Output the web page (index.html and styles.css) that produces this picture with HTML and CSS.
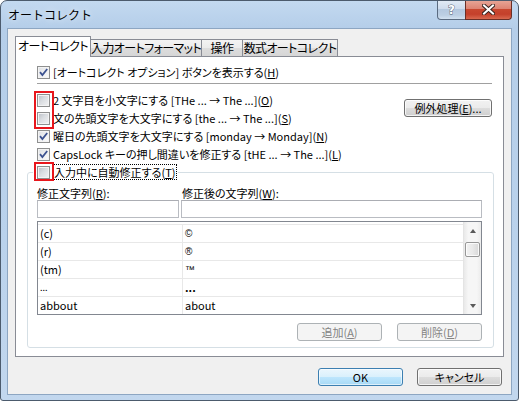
FILE: index.html
```html
<!DOCTYPE html>
<html lang="ja">
<head>
<meta charset="utf-8">
<title>オートコレクト</title>
<link rel="stylesheet" href="styles.css">
</head>
<body>
<div class="window">
  <div class="titlebar">
    <div class="title">オートコレクト</div>
    <div class="capbtns">
      <div class="cap help">?</div>
      <div class="cap close">
        <svg width="13" height="11" viewBox="0 0 13 11"><path d="M2 1.5 L11 9.5 M11 1.5 L2 9.5" stroke="#3b2520" stroke-width="4" stroke-linecap="square"/><path d="M2 1.5 L11 9.5 M11 1.5 L2 9.5" stroke="#ffffff" stroke-width="2" stroke-linecap="square"/></svg>
      </div>
    </div>
  </div>
  <div class="client">
    <div class="tabs">
      <div class="tab active w1">オートコレクト</div>
      <div class="tab w2">入力オートフォーマット</div>
      <div class="tab w3">操作</div>
      <div class="tab w4">数式オートコレクト</div>
    </div>
    <div class="panel">
      <div class="row r1"><span class="cb on"><svg width="11" height="11" viewBox="0 0 11 11"><path d="M2 5.2 L4.4 8 L9.2 2" fill="none" stroke="#3c5290" stroke-width="1.8"/></svg></span><span>[オートコレクト オプション] ボタンを表示する(<u>H</u>)</span></div>
      <div class="sep"></div>
      <div class="opts">
        <div class="optlist">
          <div class="row"><span class="cb"></span><span>2 文字目を小文字にする [THe ... → The ...](<u>O</u>)</span></div>
          <div class="row"><span class="cb"></span><span>文の先頭文字を大文字にする [the ... → The ...](<u>S</u>)</span></div>
          <div class="row"><span class="cb on"><svg width="11" height="11" viewBox="0 0 11 11"><path d="M2 5.2 L4.4 8 L9.2 2" fill="none" stroke="#3c5290" stroke-width="1.8"/></svg></span><span>曜日の先頭文字を大文字にする [monday → Monday](<u>N</u>)</span></div>
          <div class="row"><span class="cb on"><svg width="11" height="11" viewBox="0 0 11 11"><path d="M2 5.2 L4.4 8 L9.2 2" fill="none" stroke="#3c5290" stroke-width="1.8"/></svg></span><span>CapsLock キーの押し間違いを修正する [tHE ... → The ...](<u>L</u>)</span></div>
        </div>
        <div class="btn exc">例外処理(<u>E</u>)...</div>
      </div>
      <div class="group">
        <div class="row legend"><span class="cb"></span><span class="focus">入力中に自動修正する(<u>T</u>)</span></div>
        <div class="labels"><span class="lab1">修正文字列(<u>R</u>):</span><span>修正後の文字列(<u>W</u>):</span></div>
        <div class="inputs"><div class="tb tb1"></div><div class="tb tb2"></div></div>
        <div class="list">
          <div class="lrows">
            <div class="lrow"><div class="c1">(c)</div><div class="c2 sym">©</div></div>
            <div class="lrow"><div class="c1">(r)</div><div class="c2 sym">®</div></div>
            <div class="lrow"><div class="c1">(tm)</div><div class="c2 sym">™</div></div>
            <div class="lrow"><div class="c1 small">...</div><div class="c2 bold">...</div></div>
            <div class="lrow"><div class="c1">abbout</div><div class="c2">about</div></div>
          </div>
          <div class="sbar">
            <div class="sarrow"><span class="tri up"></span></div>
            <div class="thumb"></div>
            <div class="strack"></div>
            <div class="sarrow"><span class="tri down"></span></div>
          </div>
        </div>
        <div class="gbtns"><div class="btn dis">追加(<u>A</u>)</div><div class="btn dis">削除(<u>D</u>)</div></div>
      </div>
    </div>
    <div class="dlgbtns"><div class="btn def">OK</div><div class="btn">キャンセル</div></div>
  </div>
  <div class="mark m1"></div>
  <div class="mark m2"></div>
</div>
</body>
</html>
```

FILE: styles.css
```css
html, body {
  margin: 0;
  padding: 0;
  background: #ffffff;
}
body {
  font-family: "Noto Sans CJK JP", "Noto Sans", sans-serif;
  font-size: 11px;
  color: #000;
}
.window {
  position: relative;
  width: 519px;
  height: 401px;
  box-sizing: border-box;
  border: 1px solid #4c5b6d;
  border-radius: 7px 7px 3px 3px;
  padding: 0 6px 5px 6px;
  background: linear-gradient(180deg, #c3d9f0 0px, #b5cee9 27px, #bad2ec 60%, #c2d7ee 100%);
  display: flex;
  flex-direction: column;
  overflow: hidden;
}
.titlebar {
  height: 27px;
  flex: none;
  display: flex;
  justify-content: space-between;
  align-items: flex-start;
}
.title {
  padding-left: 1px;
  line-height: 27px;
  font-size: 12px;
  align-self: center;
  text-shadow: 0 0 6px rgba(255,255,255,0.9);
}
.capbtns {
  display: flex;
  margin-top: -1px;
}
.cap {
  height: 20px;
  box-sizing: border-box;
  border: 1px solid #5a6b80;
  border-top: none;
  display: flex;
  align-items: center;
  justify-content: center;
}
.help {
  width: 29px;
  border-radius: 0 0 0 4px;
  background: linear-gradient(180deg, #e3ecf6 0%, #cfdced 45%, #b4c8df 50%, #bccfe3 80%, #d3e2f1 100%);
  color: #ffffff;
  font-family: "DejaVu Sans", sans-serif;
  font-weight: bold;
  font-size: 12px;
  line-height: 12px;
  -webkit-text-stroke: 0.8px #4a5566;
  paint-order: stroke fill;
}
.close {
  width: 47px;
  margin-left: -1px;
  border-color: #6b2f26;
  border-radius: 0 0 4px 0;
  background: linear-gradient(180deg, #e8a899 0%, #dd8473 45%, #c8472f 50%, #c4402b 75%, #d9694f 100%);
}
.client {
  flex: 1;
  border: 1px solid #8da6c2;
  background: #f0f0f0;
  display: flex;
  flex-direction: column;
}
.tabs {
  display: flex;
  align-items: flex-end;
  height: 20px;
  margin: 7px 0 0 7px;
  flex: none;
}
.tab {
  height: 17px;
  box-sizing: border-box;
  border: 1px solid #898c95;
  border-bottom: none;
  margin-left: -1px;
  background: linear-gradient(180deg, #f3f3f3 0%, #ebebeb 50%, #dddddd 50%, #d6d6d6 100%);
  text-align: center;
  line-height: 15px;
  font-size: 12px;
  letter-spacing: -0.6px;
  font-feature-settings: "palt";
  white-space: nowrap;
}
.tab.active {
  height: 21px;
  margin-left: 0;
  margin-bottom: -1px;
  background: #ffffff;
  position: relative;
  z-index: 1;
  line-height: 18px;
}
.w1 { width: 76px; }
.w2 { width: 112px; }
.w3 { width: 42px; }
.w4 { width: 96px; }
.panel {
  margin: 0 7px;
  height: 301px;
  box-sizing: border-box;
  border: 1px solid #898c95;
  background: #ffffff;
  padding-top: 6px;
  flex: none;
}
.row {
  display: flex;
  align-items: center;
  height: 18px;
  white-space: nowrap;
  line-height: 14px;
  font-feature-settings: "palt";
}
.r1 { margin: 0 11px 0 21px; }
.sep {
  margin: 2px 11px 7px 21px;
  height: 1px;
  background: #a0a0a0;
}
.opts {
  display: flex;
  justify-content: space-between;
  align-items: flex-start;
  margin: 0 11px 0 21px;
}
.cb {
  width: 13px;
  height: 13px;
  box-sizing: border-box;
  border: 1px solid #8e8f8f;
  background: linear-gradient(135deg, #b9bec5 0%, #dadde1 45%, #f4f4f5 100%);
  box-shadow: inset 0 0 0 1px #f3f3f3;
  margin-right: 3px;
  flex: none;
  display: flex;
  align-items: center;
  justify-content: center;
}
.cb.on {
  background: linear-gradient(135deg, #dcdfe3 0%, #eeeff1 50%, #fbfbfb 100%);
}
.cb svg { display: block; }
.btn {
  height: 18px;
  box-sizing: border-box;
  border: 1px solid #707070;
  border-radius: 3px;
  background: linear-gradient(180deg, #f2f2f2 0%, #ebebeb 50%, #dddddd 50%, #cfcfcf 100%);
  box-shadow: inset 0 0 0 1px rgba(255,255,255,0.75);
  display: flex;
  align-items: center;
  justify-content: center;
  line-height: 14px;
  white-space: nowrap;
  font-feature-settings: "palt";
}
.exc {
  width: 88px;
  margin-top: 8px;
}
.btn.dis {
  border-color: #adb2b5;
  background: #f4f4f4;
  box-shadow: none;
  color: #838383;
  width: 85px;
}
.btn.def {
  border-color: #3c7fb1;
  background: linear-gradient(180deg, #eaf6fd 0%, #d9f0fc 50%, #bee6fd 50%, #a7d9f5 100%);
  box-shadow: inset 0 0 0 1px rgba(255,255,255,0.6);
}
.group {
  margin: 9px 9px 0 11px;
  border: 1px solid #d5dfe5;
  border-radius: 3px;
  padding: 0 11px 6px 9px;
}
.legend {
  margin: -10px 0 0 -4px;
  padding: 0 2px 0 4px;
  background: #ffffff;
  width: max-content;
}
.focus {
  outline: 1px dotted #000000;
  outline-offset: 0px;
  padding: 0 1px;
}
.labels {
  display: flex;
  margin-top: 5px;
  line-height: 14px;
  white-space: nowrap;
  font-feature-settings: "palt";
}
.lab1 { width: 145px; }
.inputs {
  display: flex;
  gap: 2px;
}
.tb {
  height: 18px;
  box-sizing: border-box;
  border: 1px solid #b9bcc2;
  border-top-color: #abadb3;
  background: #ffffff;
}
.tb1 { width: 142px; }
.tb2 { flex: 1; }
.list {
  margin-top: 3px;
  height: 94px;
  box-sizing: border-box;
  border: 1px solid #828790;
  background: #ffffff;
  display: flex;
  overflow: hidden;
}
.lrows {
  flex: 1;
  padding-top: 2px;
}
.lrow {
  display: flex;
  height: 18px;
  box-sizing: border-box;
  border-top: 1px solid #e8e8e8;
  line-height: 17px;
}
.c1 {
  width: 145px;
  box-sizing: border-box;
  border-right: 1px solid #e8e8e8;
  padding-left: 2px;
}
.c2 {
  flex: 1;
  padding-left: 2px;
}
.c2.sym {
  font-family: "Liberation Sans", sans-serif;
  font-size: 10px;
}
.c1.small { font-size: 9px; }
.c2.bold { font-weight: bold; }
.sbar {
  width: 18px;
  flex: none;
  display: flex;
  flex-direction: column;
  background: linear-gradient(90deg, #e9e9e9 0%, #f6f6f6 25%, #f6f6f6 75%, #ececec 100%);
  border-left: 1px solid #e4e4e4;
  box-sizing: border-box;
}
.sarrow {
  height: 17px;
  display: flex;
  align-items: center;
  justify-content: center;
  flex: none;
}
.tri {
  width: 0;
  height: 0;
  border-left: 3.5px solid transparent;
  border-right: 3.5px solid transparent;
}
.tri.up { border-bottom: 4px solid #5a5a5a; }
.tri.down { border-top: 4px solid #5a5a5a; }
.thumb {
  margin: 3px 1px 0 1px;
  height: 15px;
  box-sizing: border-box;
  border: 1px solid #979797;
  border-radius: 2px;
  background: linear-gradient(90deg, #f2f2f2 0%, #e9e9e9 50%, #d8d8d8 100%);
  box-shadow: inset 0 0 0 1px rgba(255,255,255,0.8);
  flex: none;
}
.strack { flex: 1; }
.gbtns {
  display: flex;
  justify-content: flex-end;
  gap: 15px;
  margin-top: 8px;
}
.dlgbtns {
  display: flex;
  justify-content: flex-end;
  gap: 14px;
  padding-right: 9px;
  margin-top: 11px;
}
.dlgbtns .btn { width: 85px; }
u {
  text-decoration: underline;
  text-underline-offset: 1px;
}
.mark {
  position: absolute;
  box-sizing: border-box;
  border: 2px solid #e8161c;
  width: 20px;
}
.m1 { left: 33px; top: 90px; height: 38px; }
.m2 { left: 33px; top: 161px; height: 19px; }
```
